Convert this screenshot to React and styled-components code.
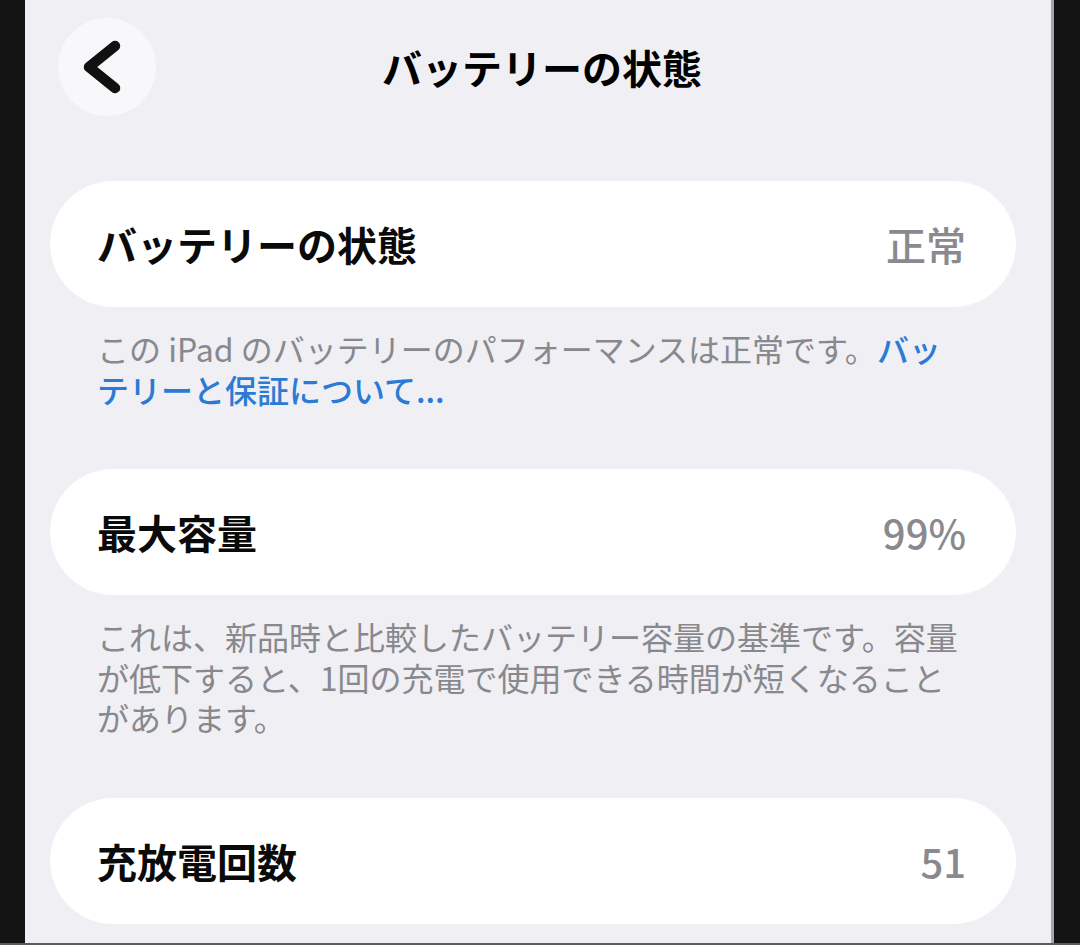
import React from 'react';
import styled, { createGlobalStyle } from 'styled-components';

const GlobalStyle = createGlobalStyle`
  * { box-sizing: border-box; }
  body {
    margin: 0;
    background: #141414;
    font-family: "Noto Sans CJK JP", "Noto Sans", sans-serif;
  }
`;

const sections = [
  {
    label: 'バッテリーの状態',
    value: '正常',
    note: 'この iPad のバッテリーのパフォーマンスは正常です。',
    link: 'バッテリーと保証について...',
  },
  {
    label: '最大容量',
    value: '99%',
    note: 'これは、新品時と比較したバッテリー容量の基準です。容量が低下すると、1回の充電で使用できる時間が短くなることがあります。',
  },
  {
    label: '充放電回数',
    value: '51',
  },
];

export default function App() {
  return (
    <>
      <GlobalStyle />
      <Frame>
        <Screen>
          <Header>
            <BackButton aria-label="戻る">
              <svg width="98" height="98" viewBox="0 0 98 98">
                <polyline
                  points="57,28 31,49 57,70"
                  fill="none"
                  stroke="#111"
                  strokeWidth="10.5"
                  strokeLinecap="round"
                  strokeLinejoin="round"
                />
              </svg>
            </BackButton>
            <Title>バッテリーの状態</Title>
            <span />
          </Header>

          <List>
            {sections.map((s) => (
              <Section key={s.label}>
                <Card>
                  <Label>{s.label}</Label>
                  <Value>{s.value}</Value>
                </Card>
                {s.note && (
                  <Note>
                    {s.note}
                    {s.link && <NoteLink href="#">{s.link}</NoteLink>}
                  </Note>
                )}
              </Section>
            ))}
          </List>
        </Screen>
      </Frame>
    </>
  );
}

const Frame = styled.div`
  width: 1080px;
  height: 945px;
  display: flex;
  padding: 0 26px 0 25px;
  border-bottom: 2px solid #5c5c5c;
  overflow: hidden;
`;

const Screen = styled.main`
  flex: 1;
  background: #efeff4;
  border-right: 3px solid #a6a6a8;
  overflow: hidden;
`;

const Header = styled.header`
  display: grid;
  grid-template-columns: 1fr auto 1fr;
  align-items: center;
  padding: 18px 25px 0 33px;
  margin-bottom: 65px;
`;

const BackButton = styled.button`
  width: 98px;
  height: 98px;
  padding: 0;
  border: none;
  border-radius: 50%;
  background: #f8f8fa;
  display: flex;
  align-items: center;
  justify-content: center;
  cursor: pointer;
`;

const Title = styled.h1`
  margin: 0;
  font-size: 40px;
  font-weight: 700;
  color: #000;
  line-height: 1;
`;

const List = styled.div`
  display: flex;
  flex-direction: column;
  gap: 60px;
  padding: 0 35px 0 25px;
`;

const Section = styled.section`
  display: flex;
  flex-direction: column;
`;

const Card = styled.div`
  height: 126px;
  border-radius: 63px;
  background: #ffffff;
  display: flex;
  align-items: center;
  justify-content: space-between;
  padding: 0 50px 0 47px;
`;

const Label = styled.span`
  font-size: 40px;
  font-weight: 700;
  color: #0a0a0a;
`;

const Value = styled.span`
  font-size: 40px;
  font-weight: 500;
  color: #8a8a8e;
`;

const Note = styled.p`
  margin: 21px 0 0;
  padding: 0 46px 0 47px;
  font-size: 32px;
  line-height: 40.5px;
  color: #88888d;
`;

const NoteLink = styled.a`
  color: #2b7bd4;
  font-weight: 500;
  text-decoration: none;
`;
